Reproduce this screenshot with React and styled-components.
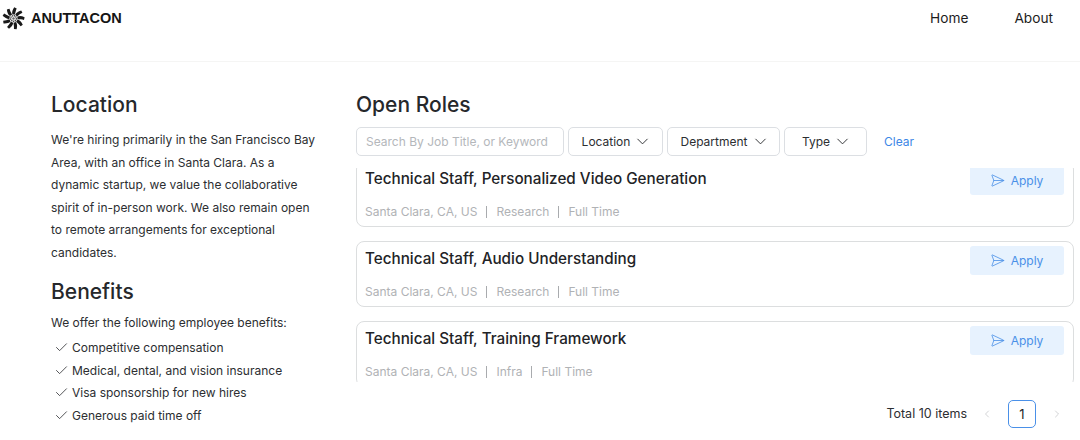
import React from "react";
import styled, { createGlobalStyle } from "styled-components";
import { Check, ChevronDown, ChevronLeft, ChevronRight, SendHorizontal } from "lucide-react";

const GlobalStyle = createGlobalStyle`
  html, body {
    margin: 0;
    height: 100%;
    overflow: hidden;
    background: #fff;
    font-family: Inter, "Noto Sans", sans-serif;
    color: #26282b;
  }
  * {
    box-sizing: border-box;
  }
`;

const Page = styled.div`
  width: 1080px;
  height: 440px;
  overflow: hidden;
`;

const Header = styled.header`
  height: 62px;
  display: flex;
  justify-content: space-between;
  align-items: flex-start;
  border-bottom: 1px solid #f5f5f4;
`;

const Brand = styled.div`
  display: flex;
  align-items: center;
  gap: 6px;
  padding: 5px 0 0 2px;
`;

const Wordmark = styled.span`
  font-family: "Liberation Sans", sans-serif;
  font-size: 14.5px;
  font-weight: 700;
  line-height: 26px;
  color: #151515;
`;

const Nav = styled.nav`
  display: flex;
  gap: 46px;
  padding: 9px 27px 0 0;
`;

const NavLink = styled.a`
  font-size: 13.7px;
  line-height: 18px;
  color: #1c1c1c;
`;

const Main = styled.main`
  display: grid;
  grid-template-columns: 305px 718px;
  padding: 29px 0 0 51px;
`;

const Side = styled.aside`
  padding-right: 35px;
`;

const SectionTitle = styled.h2`
  margin: 0;
  font-size: 21px;
  font-weight: 500;
  line-height: 28px;
  color: #26282b;
`;

const Paragraph = styled.p`
  margin: 10px 0 14px;
  font-size: 12px;
  line-height: 22.5px;
  color: #2c2e31;
`;

const Lead = styled.p`
  margin: 6px 0 2px;
  font-size: 12px;
  line-height: 22px;
  color: #2c2e31;
`;

const BenefitList = styled.ul`
  list-style: none;
  margin: 0;
  padding: 0 0 0 3px;
`;

const Benefit = styled.li`
  display: flex;
  align-items: center;
  gap: 3px;
  height: 22.8px;
  font-size: 12px;
  color: #2c2e31;
`;

const Roles = styled.section`
  display: flex;
  flex-direction: column;
`;

const Filters = styled.div`
  display: flex;
  align-items: center;
  gap: 4px;
  margin: 8px 0 12px;
`;

const SearchInput = styled.input`
  width: 208px;
  height: 29px;
  padding: 0 9px;
  border: 1px solid #dcdfe3;
  border-radius: 5px;
  font: 12px Inter, sans-serif;
  outline: none;

  &::placeholder {
    color: #b4b7bb;
  }
`;

const FilterButton = styled.button`
  width: ${({ $width }) => $width}px;
  height: 29px;
  display: flex;
  align-items: center;
  justify-content: center;
  gap: 3px;
  padding: 0;
  background: #fff;
  border: 1px solid #dcdfe3;
  border-radius: 5px;
  font: 12px Inter, sans-serif;
  color: #2c2e31;
`;

const FilterChevron = styled(ChevronDown)`
  margin-right: -3px;
`;

const ClearLink = styled.a`
  margin-left: 13px;
  font-size: 12px;
  color: #3d87e6;
`;

const ListViewport = styled.div`
  height: 214px;
  overflow: hidden;
`;

const JobList = styled.div`
  display: flex;
  flex-direction: column;
  gap: 14px;
  margin-top: -7px;
`;

const JobCard = styled.article`
  height: 66px;
  display: flex;
  justify-content: space-between;
  padding: 4px 9px 0 8px;
  border: 1px solid #dcdedf;
  border-radius: 8px;
  background: #fff;
`;

const JobInfo = styled.div`
  display: flex;
  flex-direction: column;
  justify-content: space-between;
  padding: 1px 0 5px;
`;

const JobTitle = styled.h3`
  margin: 0;
  font-size: 15.25px;
  font-weight: 500;
  line-height: 24px;
  color: #222326;
`;

const JobMeta = styled.div`
  display: flex;
  align-items: center;
  font-size: 12px;
  line-height: 18px;
  color: #b0b2b5;
`;

const MetaDivider = styled.span`
  width: 1px;
  height: 12px;
  margin: 0 9px;
  background: #a9abae;
`;

const ApplyButton = styled.button`
  width: 94px;
  height: 29px;
  display: flex;
  align-items: center;
  justify-content: center;
  gap: 6px;
  padding: 0 1px 0 0;
  border: none;
  border-radius: 3px;
  background: #e7f2fe;
  color: #4a90e8;
  font: 12px/29px Inter, sans-serif;
`;

const Pagination = styled.div`
  display: flex;
  align-items: center;
  justify-content: flex-end;
  margin-top: 18px;
  padding-right: 11px;
`;

const Total = styled.span`
  margin-right: 14px;
  padding-bottom: 2px;
  font-size: 12.5px;
  color: #2c2e31;
`;

const PageArrow = styled.span`
  width: 12px;
  display: flex;
  justify-content: center;
  color: #b4b6b9;
`;

const PageNumber = styled.span`
  width: 28px;
  height: 28px;
  margin: 0 15px;
  display: flex;
  align-items: center;
  justify-content: center;
  border: 1px solid #4a90e8;
  border-radius: 5px;
  font-size: 13px;
  color: #222326;
`;

const Swirl = () => (
  <svg width="23" height="23" viewBox="-13 -13 26 26" fill="#1a1a1a">
    {Array.from({ length: 9 }, (_, i) => (
      <path
        key={i}
        transform={`rotate(${i * 40})`}
        d="M-1.3 -4.6 C-1.9 -7.2 -1.2 -9.6 .8 -12.6 L3.6 -11.4 C2.6 -9.2 2.2 -7 1.6 -4.4 Z"
      />
    ))}
    {Array.from({ length: 9 }, (_, i) => (
      <circle key={i} cx="0" cy="-3.2" r=".9" transform={`rotate(${i * 40 + 18})`} fill="#444" />
    ))}
    <circle r="1.4" fill="#666" />
  </svg>
);

const jobs = [
  { title: "Technical Staff, Personalized Video Generation", team: "Research" },
  { title: "Technical Staff, Audio Understanding", team: "Research" },
  { title: "Technical Staff, Training Framework", team: "Infra" },
];

const benefits = [
  "Competitive compensation",
  "Medical, dental, and vision insurance",
  "Visa sponsorship for new hires",
  "Generous paid time off",
];

const filters = [
  { label: "Location", width: 95 },
  { label: "Department", width: 113 },
  { label: "Type", width: 83 },
];

export default function App() {
  return (
    <Page>
      <GlobalStyle />
      <Header>
        <Brand>
          <Swirl />
          <Wordmark>ANUTTACON</Wordmark>
        </Brand>
        <Nav>
          <NavLink>Home</NavLink>
          <NavLink>About</NavLink>
        </Nav>
      </Header>
      <Main>
        <Side>
          <SectionTitle>Location</SectionTitle>
          <Paragraph>
            We're hiring primarily in the San Francisco Bay Area, with an office in Santa Clara. As a
            dynamic startup, we value the collaborative spirit of in-person work. We also remain open
            to remote arrangements for exceptional candidates.
          </Paragraph>
          <SectionTitle>Benefits</SectionTitle>
          <Lead>We offer the following employee benefits:</Lead>
          <BenefitList>
            {benefits.map((b) => (
              <Benefit key={b}>
                <Check size={15} strokeWidth={1.3} />
                {b}
              </Benefit>
            ))}
          </BenefitList>
        </Side>
        <Roles>
          <SectionTitle>Open Roles</SectionTitle>
          <Filters>
            <SearchInput placeholder="Search By Job Title, or Keyword" />
            {filters.map((f) => (
              <FilterButton key={f.label} $width={f.width}>
                {f.label}
                <FilterChevron size={19} strokeWidth={1.2} />
              </FilterButton>
            ))}
            <ClearLink>Clear</ClearLink>
          </Filters>
          <ListViewport>
            <JobList>
              {jobs.map((job) => (
                <JobCard key={job.title}>
                  <JobInfo>
                    <JobTitle>{job.title}</JobTitle>
                    <JobMeta>
                      Santa Clara, CA, US
                      <MetaDivider />
                      {job.team}
                      <MetaDivider />
                      Full Time
                    </JobMeta>
                  </JobInfo>
                  <ApplyButton>
                    <SendHorizontal size={15} strokeWidth={1.3} />
                    Apply
                  </ApplyButton>
                </JobCard>
              ))}
            </JobList>
          </ListViewport>
          <Pagination>
            <Total>Total 10 items</Total>
            <PageArrow>
              <ChevronLeft size={16} strokeWidth={1.2} />
            </PageArrow>
            <PageNumber>1</PageNumber>
            <PageArrow>
              <ChevronRight size={16} strokeWidth={1.2} />
            </PageArrow>
          </Pagination>
        </Roles>
      </Main>
    </Page>
  );
}
